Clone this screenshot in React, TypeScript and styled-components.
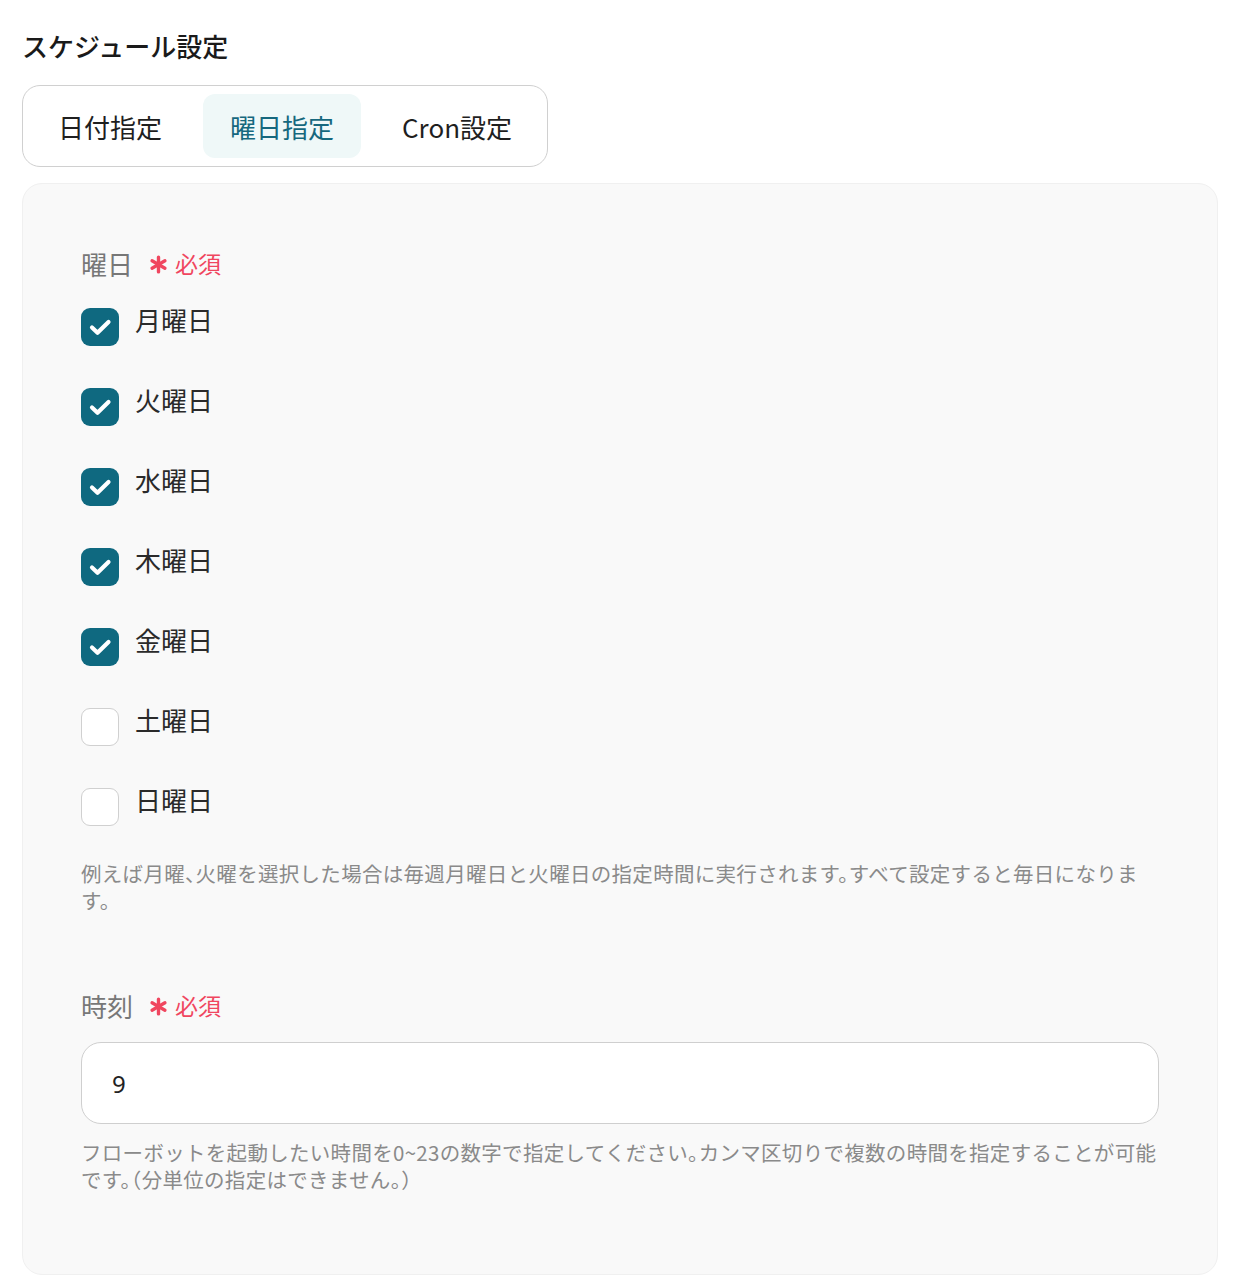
import styled, { createGlobalStyle } from 'styled-components'

const GlobalStyle = createGlobalStyle`
  body {
    margin: 0;
    background: #fff;
    font-family: 'Noto Sans CJK JP', 'Noto Sans', sans-serif;
    color: #222;
  }
`

const Page = styled.div`
  padding: 26px 38px 6px 22px;
`

const Title = styled.h2`
  margin: 0 0 19px;
  font-size: 26px;
  font-weight: 500;
  line-height: 40px;
  color: #1a1a1a;
`

const TabBar = styled.div`
  display: inline-flex;
  gap: 14px;
  padding: 8px 8px;
  border: 1.5px solid #d0d0d0;
  border-radius: 18px;
  background: #fff;
`

const Tab = styled.div<{ $active?: boolean }>`
  display: flex;
  align-items: center;
  height: 64px;
  padding: 0 27px;
  border-radius: 12px;
  font-size: 26px;
  background: ${({ $active }) => ($active ? '#eff8f8' : 'transparent')};
  color: ${({ $active }) => ($active ? '#16687e' : '#1f1f1f')};
`

const Panel = styled.div`
  margin-top: 16px;
  padding: 60px 58px 81px;
  background: #f9f9f9;
  border: 1px solid #f0f0f0;
  border-radius: 20px;
`

const Section = styled.div`
  & + & {
    margin-top: 72px;
  }
`

const Label = styled.div`
  display: flex;
  align-items: center;
  gap: 16px;
  height: 38px;
  font-size: 26px;
  color: #777;
`

const Required = styled.span`
  display: flex;
  align-items: center;
  gap: 7px;
  font-size: 23px;
  color: #f0465f;

  svg {
    margin-top: 3px;
  }
`

const CheckList = styled.div`
  display: flex;
  flex-direction: column;
  gap: 42px;
  margin-top: 26px;
`

const CheckRow = styled.label`
  display: flex;
  align-items: flex-start;
  gap: 16px;
  font-size: 26px;
  line-height: 26px;
  color: #2a2a2a;
`

const Box = styled.span<{ $checked: boolean }>`
  display: flex;
  width: 38px;
  height: 38px;
  box-sizing: border-box;
  border-radius: 9px;
  flex-shrink: 0;
  background: ${({ $checked }) => ($checked ? '#0f6980' : '#fff')};
  border: ${({ $checked }) => ($checked ? 'none' : '1.5px solid #d0d0d0')};
`

const CheckText = styled.span`
  margin-top: -1px;
`

const Help = styled.p<{ $gap: number }>`
  margin: ${({ $gap }) => $gap}px 0 0;
  font-size: 20.5px;
  line-height: 27px;
  letter-spacing: 0.3px;
  font-feature-settings: 'halt';
  color: #8a8a8a;
`

const Input = styled.input`
  display: block;
  width: 100%;
  box-sizing: border-box;
  height: 82px;
  margin-top: 18px;
  padding: 0 30px;
  border: 1.5px solid #cfcfcf;
  border-radius: 20px;
  background: #fff;
  font-family: 'Noto Sans', sans-serif;
  font-size: 24px;
  color: #222;
  outline: none;
`

const days = [
  { name: '月曜日', checked: true },
  { name: '火曜日', checked: true },
  { name: '水曜日', checked: true },
  { name: '木曜日', checked: true },
  { name: '金曜日', checked: true },
  { name: '土曜日', checked: false },
  { name: '日曜日', checked: false },
]

const CheckMark = () => (
  <svg width='38' height='38' viewBox='0 0 38 38' fill='none'>
    <path
      d='M11 19.5l5.5 5.2L27.5 14'
      stroke='#fff'
      strokeWidth='4.2'
      strokeLinecap='round'
      strokeLinejoin='round'
    />
  </svg>
)

const RequiredMark = () => (
  <Required>
    <svg width='19' height='19' viewBox='0 0 18 18'>
      <g stroke='#f0465f' strokeWidth='3.2' strokeLinecap='round'>
        <path d='M9 2v14' />
        <path d='M2.9 5.5l12.2 7' />
        <path d='M2.9 12.5l12.2-7' />
      </g>
    </svg>
    必須
  </Required>
)

const App = (): JSX.Element => {
  return (
    <>
      <GlobalStyle />
      <Page>
        <Title>スケジュール設定</Title>
        <TabBar>
          <Tab>日付指定</Tab>
          <Tab $active>曜日指定</Tab>
          <Tab>Cron設定</Tab>
        </TabBar>
        <Panel>
          <Section>
            <Label>
              曜日
              <RequiredMark />
            </Label>
            <CheckList>
              {days.map((d) => (
                <CheckRow key={d.name}>
                  <Box $checked={d.checked}>{d.checked && <CheckMark />}</Box>
                  <CheckText>{d.name}</CheckText>
                </CheckRow>
              ))}
            </CheckList>
            <Help $gap={34}>
              例えば月曜、火曜を選択した場合は毎週月曜日と火曜日の指定時間に実行されます。すべて設定すると毎日になります。
            </Help>
          </Section>
          <Section>
            <Label>
              時刻
              <RequiredMark />
            </Label>
            <Input defaultValue='9' />
            <Help $gap={15}>
              フローボットを起動したい時間を0~23の数字で指定してください。カンマ区切りで複数の時間を指定することが可能です。（分単位の指定はできません。）
            </Help>
          </Section>
        </Panel>
      </Page>
    </>
  )
}

export default App
